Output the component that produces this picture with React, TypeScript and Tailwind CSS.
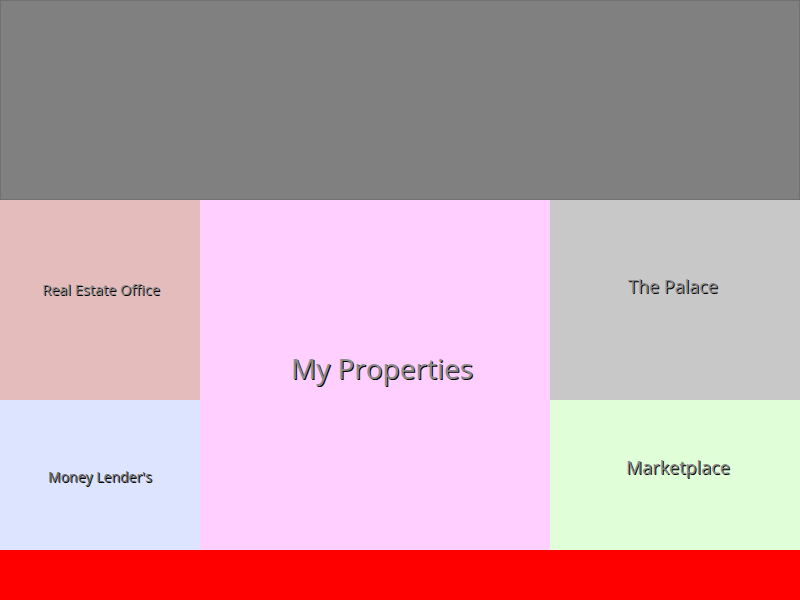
const shadow = "[text-shadow:1px_1px_0_#000]";

export default function App() {
  return (
    <main className="w-[800px] h-[600px] flex flex-col font-['Open_Sans',sans-serif]">
      <header className="h-[200px] bg-[#808080] border border-[#707070]" />
      <section className="h-[350px] flex">
        <div className="w-[200px] flex flex-col">
          <div className="h-[200px] bg-[#e4bcbc] flex items-center justify-center pb-[20px] pl-[2px]">
            <span className={`text-[14.5px] text-[#8a8a8a] ${shadow}`}>Real Estate Office</span>
          </div>
          <div className="h-[150px] bg-[#dde4ff] flex items-center justify-center pt-[2px]">
            <span className={`text-[14px] text-[#6a6a6a] ${shadow}`}>Money Lender's</span>
          </div>
        </div>
        <div className="w-[350px] bg-[#ffd0ff] flex items-center justify-center pl-[14px] pb-[14px]">
          <span className={`text-[28px] text-[#8c8c8c] ${shadow}`}>My Properties</span>
        </div>
        <div className="w-[250px] flex flex-col">
          <div className="h-[200px] bg-[#c8c8c8] flex items-center justify-center pb-[28px] pr-[4px]">
            <span className={`text-[18px] text-[#8c8c8c] ${shadow}`}>The Palace</span>
          </div>
          <div className="h-[150px] bg-[#e0ffd8] flex items-center justify-center pb-[16px] pl-[6px]">
            <span className={`text-[18px] text-[#8c8c8c] ${shadow}`}>Marketplace</span>
          </div>
        </div>
      </section>
      <footer className="h-[50px] bg-[#ff0000]" />
    </main>
  );
}
